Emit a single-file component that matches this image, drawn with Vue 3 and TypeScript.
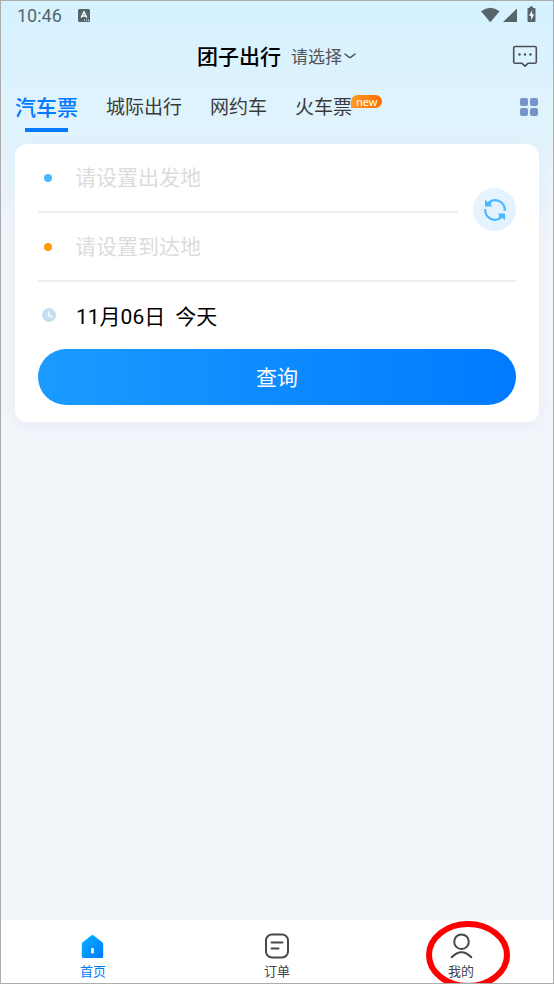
<script setup lang="ts">
import { ref } from 'vue'

interface Tab {
  label: string
  badge?: string
}

const tabs: Tab[] = [
  { label: '汽车票' },
  { label: '城际出行' },
  { label: '网约车' },
  { label: '火车票', badge: 'new' },
]
const activeTab = ref(0)
const origin = ref('')
const destination = ref('')

function swapPlaces(): void {
  const previous = origin.value
  origin.value = destination.value
  destination.value = previous
}
</script>

<template>
  <div class="screen">
    <div class="status">
      <span class="clock">10:46</span>
      <svg class="status-app" width="12" height="13" viewBox="0 0 12 13" aria-hidden="true">
        <rect width="12" height="13" rx="1.5" fill="#56656b" />
        <path d="M3.2 8.6 6 2.8 8.8 8.6M4.2 7h3.6" fill="none" stroke="#fff" stroke-width="1.4" />
        <path d="M6 11.2h1M8 11.2h1M10 11.2h1" stroke="#fff" stroke-width="1" />
      </svg>
      <svg class="status-icons" width="58" height="18" viewBox="0 0 58 18" aria-hidden="true">
        <g fill="#56656b">
          <path d="M1 5.200Q10.300 -1.800 19.600 5.200L10.300 16.200Z" />
          <path d="M37 2.500V16H23Z" />
          <path d="M49.500 0.500h3.500v1.500h1.500q1 0 1 1V15q0 1-1 1h-6q-1 0-1-1V3q0-1 1-1h1Z" />
        </g>
        <path d="M52.300 4 49 9.800h2.200V14.200L54.200 8.300H52Z" fill="#fff" />
      </svg>
    </div>

    <header class="header">
      <div class="heading">
        <h1 class="title">团子出行</h1>
        <button class="region" type="button">
          请选择
          <svg width="14" height="10" viewBox="0 0 14 10" aria-hidden="true">
            <path d="M2 4 6 7.200Q7 7.900 8 7.200L12 4" fill="none" stroke="#555" stroke-width="1.600" stroke-linecap="round" />
          </svg>
        </button>
      </div>
      <button class="message" type="button" aria-label="消息">
        <svg width="26" height="23" viewBox="0 0 26 23" aria-hidden="true">
          <path
            d="M3 1.500H23Q24.300 1.500 24.300 2.800V17Q24.300 18.300 23 18.300H16L13 21.200 10 18.300H3Q1.700 18.300 1.700 17V2.800Q1.700 1.500 3 1.500Z"
            fill="none" stroke="#4c5053" stroke-width="1.600" stroke-linejoin="round"
          />
          <g fill="#4c5053"><circle cx="7.500" cy="9.500" r="1.200" /><circle cx="13" cy="9.500" r="1.200" /><circle cx="18.500" cy="9.500" r="1.200" /></g>
        </svg>
      </button>
    </header>

    <nav class="tabs">
      <button
        v-for="(tab, index) in tabs"
        :key="tab.label"
        class="tab"
        :class="{ active: index === activeTab }"
        type="button"
        @click="activeTab = index"
      >
        {{ tab.label }}<span v-if="tab.badge" class="badge">{{ tab.badge }}</span>
      </button>
      <button class="more" type="button" aria-label="全部">
        <svg width="18" height="18" viewBox="0 0 18 18" fill="#7595ca" aria-hidden="true">
          <rect width="8" height="8" rx="2" /><rect x="10" width="8" height="8" rx="2" />
          <rect y="10" width="8" height="8" rx="2" /><rect x="10" y="10" width="8" height="8" rx="2" />
        </svg>
      </button>
    </nav>

    <main class="main">
      <form class="card" @submit.prevent>
        <div class="places">
          <label class="row origin">
            <span class="dot"></span>
            <input v-model="origin" type="text" placeholder="请设置出发地" aria-label="出发地" />
          </label>
          <button class="swap" type="button" aria-label="交换" @click="swapPlaces">
            <svg width="24" height="24" viewBox="0 0 24 24" aria-hidden="true">
              <g fill="none" stroke="#4ab8ff" stroke-width="2.200">
                <path d="M5.500 4.800A9.700 9.700 0 0 1 21.700 12.800" />
                <path d="M18.500 19.200A9.700 9.700 0 0 1 2.300 11.200" />
              </g>
              <path d="M2 1.800V8.600H9L8 6.400 8.400 4 4.600 4ZM22 22.200V15.400H15L16 17.600 15.600 20 19.400 20Z" fill="#4ab8ff" />
            </svg>
          </button>
          <label class="row destination">
            <span class="dot"></span>
            <input v-model="destination" type="text" placeholder="请设置到达地" aria-label="到达地" />
          </label>
        </div>
        <button class="row date" type="button">
          <svg width="14" height="14" viewBox="0 0 14 14" aria-hidden="true">
            <circle cx="7" cy="7" r="7" fill="#c4dfed" />
            <path d="M6.800 3.500V7.500L10.500 9.300" fill="none" stroke="#fff" stroke-width="1.300" />
          </svg>
          <span>11月06日</span><span class="day">今天</span>
        </button>
        <button class="search" type="submit">查询</button>
      </form>
    </main>

    <nav class="bottom">
      <a class="item current" href="#home">
        <svg width="26" height="26" viewBox="0 0 26 26" aria-hidden="true">
          <defs>
            <linearGradient id="home-fill" x1="0" y1="0" x2="1" y2="1">
              <stop offset="0" stop-color="#06b2ff" /><stop offset="1" stop-color="#007aff" />
            </linearGradient>
          </defs>
          <path d="M11.300 2.500Q12.500 1.500 13.700 2.500L22.300 9.300Q23.200 10 23.200 11.200V23.500Q23.200 25 21.700 25H3.300Q1.800 25 1.800 23.500V11.200Q1.800 10 2.700 9.300Z" fill="url(#home-fill)" />
          <rect x="11.200" y="15" width="2.600" height="5.500" rx="0.800" fill="#fff" />
        </svg>
        首页
      </a>
      <a class="item" href="#orders">
        <svg width="26" height="26" viewBox="0 0 26 26" fill="none" stroke="#484848" stroke-width="2" stroke-linecap="round" aria-hidden="true">
          <rect x="2" y="1.500" width="22" height="23" rx="6" />
          <path d="M7.500 9.500H18.500M7.500 15.500H14.500" />
        </svg>
        订单
      </a>
      <a class="item" href="#mine">
        <svg width="26" height="26" viewBox="0 0 26 26" fill="none" stroke="#484848" stroke-width="2" stroke-linecap="round" aria-hidden="true">
          <circle cx="13.500" cy="8.700" r="7.300" />
          <path d="M3.700 24.300Q13.500 14.200 23.300 24.300" />
        </svg>
        我的
        <svg class="ring" width="84" height="68" viewBox="0 0 84 68" aria-hidden="true">
          <ellipse cx="42" cy="34" rx="39" ry="31" fill="none" stroke="#fe0000" stroke-width="6" />
        </svg>
      </a>
    </nav>
  </div>
</template>

<style>
body {
  margin: 0;
}
</style>

<style scoped>
.screen {
  box-sizing: border-box;
  display: flex;
  flex-direction: column;
  min-height: 100vh;
  overflow: hidden;
  border: 1px solid #acacac;
  background: #f2f5fa linear-gradient(#d5f2ff, #e1f3fc 135px, #f2f5fa 240px) no-repeat;
  font-family: Roboto, 'Noto Sans CJK SC', sans-serif;
  color: #3a3a3a;
}

button,
input {
  margin: 0;
  padding: 0;
  border: 0;
  background: none;
  font: inherit;
  color: inherit;
}

button {
  cursor: pointer;
}

svg {
  display: block;
  flex: none;
}

.status {
  display: flex;
  align-items: center;
  height: 28px;
  padding: 0 15px 0 16px;
  color: #56656b;
}

.clock {
  font-size: 18px;
}

.status-app {
  margin-left: 16px;
}

.status-icons {
  margin-left: auto;
}

.header {
  display: grid;
  grid-template-columns: 1fr auto 1fr;
  align-items: center;
  height: 54px;
  padding: 0 15px;
}

.heading {
  display: flex;
  grid-column: 2;
  align-items: center;
  gap: 10px;
  padding-bottom: 2px;
}

.title {
  margin: 0;
  font-size: 21px;
  font-weight: 500;
  color: #000;
}

.region {
  display: flex;
  align-items: center;
  font-size: 17px;
  color: #555;
}

.region svg {
  margin-left: 1px;
}

.message {
  justify-self: end;
}

.tabs {
  display: flex;
  align-items: center;
  gap: 29px;
  height: 48px;
  padding: 0 15px 13px 14px;
}

.tab {
  position: relative;
  height: 48px;
  font-size: 19px;
  line-height: 50px;
  white-space: nowrap;
}

.tab + .tab {
  margin-left: -1px;
}

.tab.active {
  font-size: 21px;
  font-weight: 500;
  color: #007aff;
}

.tab.active::after {
  content: '';
  position: absolute;
  bottom: -1px;
  left: 10px;
  right: 10px;
  height: 4px;
  background: #007aff;
}

.badge {
  position: absolute;
  top: 12px;
  left: 100%;
  margin-left: -1px;
  padding: 0 5px;
  border-radius: 7px 7px 7px 0;
  background: linear-gradient(90deg, #ff9a1f, #ff6c00);
  font-family: 'Noto Sans', sans-serif;
  font-size: 11px;
  line-height: 13px;
  color: #fff;
}

.more {
  margin-left: auto;
}

.main {
  flex: 1;
  padding: 0 14px;
}

.card {
  padding: 0 23px 17px;
  border-radius: 12px;
  background: #fff;
  box-shadow: 0 3px 14px rgba(200, 215, 230, 0.24);
}

.places {
  display: grid;
  grid-template-columns: 1fr auto;
  column-gap: 15px;
}

.row {
  box-sizing: border-box;
  display: flex;
  align-items: center;
  height: 69px;
  font-size: 21px;
}

.origin,
.destination {
  border-bottom: 2px solid #eee;
}

.destination {
  grid-column: 1 / 3;
}

.dot {
  flex: none;
  width: 8px;
  height: 8px;
  margin: 0 23px 0 6px;
  border-radius: 50%;
  background: #4ab8ff;
}

.destination .dot {
  background: #ff9900;
}

.row input {
  flex: 1;
  min-width: 0;
  padding-top: 1px;
  outline: none;
}

.row input::placeholder {
  color: #dcdcdc;
  opacity: 1;
}

.swap {
  display: grid;
  place-items: center;
  align-self: end;
  width: 43px;
  height: 43px;
  margin-bottom: -18px;
  border-radius: 50%;
  background: linear-gradient(135deg, #eaf4ff, #dff1ff);
}

.date {
  width: 100%;
  height: 67px;
  padding: 0 0 2px 4px;
  color: #000;
}

.date svg {
  margin-right: 20px;
}

.day {
  margin-left: 10px;
}

.search {
  display: block;
  width: 100%;
  height: 56px;
  padding-bottom: 2px;
  border-radius: 28px;
  background: linear-gradient(90deg, #1a9bff, #007aff);
  font-size: 21px;
  color: #fff;
}

.bottom {
  display: grid;
  grid-template-columns: repeat(3, 1fr);
  height: 63px;
  background: #fff;
}

.item {
  position: relative;
  display: flex;
  flex-direction: column;
  align-items: center;
  gap: 3px;
  padding-top: 13px;
  font-size: 13px;
  line-height: 20px;
  color: #444;
  text-decoration: none;
}

.item.current {
  color: #007aff;
}

.ring {
  position: absolute;
  top: 1px;
  left: 50%;
  margin-left: -35px;
}
</style>
